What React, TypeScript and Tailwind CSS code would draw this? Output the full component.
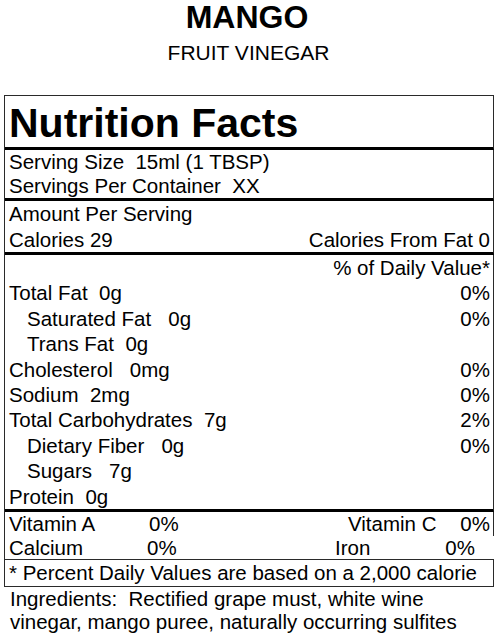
import React from 'react';

type Nutrient = { label: string; amount: string; dv?: string; indent?: boolean };

const nutrients: Nutrient[] = [
  { label: 'Total Fat', amount: '0g', dv: '0%' },
  { label: 'Saturated Fat', amount: ' 0g', dv: '0%', indent: true },
  { label: 'Trans Fat', amount: '0g', indent: true },
  { label: 'Cholesterol', amount: ' 0mg', dv: '0%' },
  { label: 'Sodium', amount: '2mg', dv: '0%' },
  { label: 'Total Carbohydrates', amount: '7g', dv: '2%' },
  { label: 'Dietary Fiber', amount: ' 0g', dv: '0%', indent: true },
  { label: 'Sugars', amount: ' 7g', indent: true },
  { label: 'Protein', amount: '0g' },
];

const App: React.FC = () => {
  return (
    <div className="w-[500px] h-[635px] overflow-hidden bg-white text-black font-['Liberation_Sans',Arial,sans-serif]">
      <div className="text-center">
        <h1 className="text-[32px] font-bold leading-[34px] -ml-[6px]">MANGO</h1>
        <p className="text-[21px] leading-[38px] -ml-[3px]">FRUIT VINEGAR</p>
      </div>

      <div className="mt-[23px] ml-[4px] w-[490px] border-l border-t border-[#2a2a2a] text-[20.5px]">
        <div className="border-r border-[#2a2a2a] border-b-[3px] border-b-black h-[54px] pt-[4px] pl-[4px]">
          <h2 className="text-[41px] font-bold leading-[46px]">Nutrition Facts</h2>
        </div>

        <div className="border-r border-[#2a2a2a] border-b-[3px] border-b-black h-[51px] pl-[4px] whitespace-pre">
          <p className="leading-[24px]">Serving Size  15ml (1 TBSP)</p>
          <p className="leading-[24px]">Servings Per Container  XX</p>
        </div>

        <div className="border-r border-[#2a2a2a] border-b-[3px] border-b-black pl-[4px] pr-[3px] leading-[25.5px]">
          <p>Amount Per Serving</p>
          <div className="flex justify-between">
            <span>Calories 29</span>
            <span>Calories From Fat 0</span>
          </div>
        </div>

        <div className="border-r border-[#2a2a2a] border-b-[3px] border-b-black pl-[4px] pr-[3px] leading-[25.4px]">
          <p className="text-right">% of Daily Value*</p>
          {nutrients.map((n) => (
            <div key={n.label} className="flex justify-between whitespace-pre">
              <span className={n.indent ? 'pl-[18px]' : ''}>
                {n.label}  {n.amount}
              </span>
              {n.dv && <span>{n.dv}</span>}
            </div>
          ))}
        </div>

        <div className="border-b border-[#2a2a2a] pl-[4px] leading-[23.5px]">
          <div className="flex border-r border-[#2a2a2a] pr-[3px]">
            <span className="w-[140px]">Vitamin A</span>
            <span className="w-[199px]">0%</span>
            <span>Vitamin C</span>
            <span className="ml-auto">0%</span>
          </div>
          <div className="flex pr-[19px]">
            <span className="w-[138px]">Calcium</span>
            <span className="w-[188px]">0%</span>
            <span>Iron</span>
            <span className="ml-auto">0%</span>
          </div>
        </div>

        <div className="border-r border-b border-[#2a2a2a] pl-[4px] h-[27px] leading-[26px]">
          <p>* Percent Daily Values are based on a 2,000 calorie</p>
        </div>
      </div>

      <p className="ml-[10px] w-[480px] text-[20.5px] leading-[23px] whitespace-pre-wrap">
        {'Ingredients:  Rectified grape must, white wine vinegar, mango puree, naturally occurring sulfites'}
      </p>
    </div>
  );
};

export default App;
